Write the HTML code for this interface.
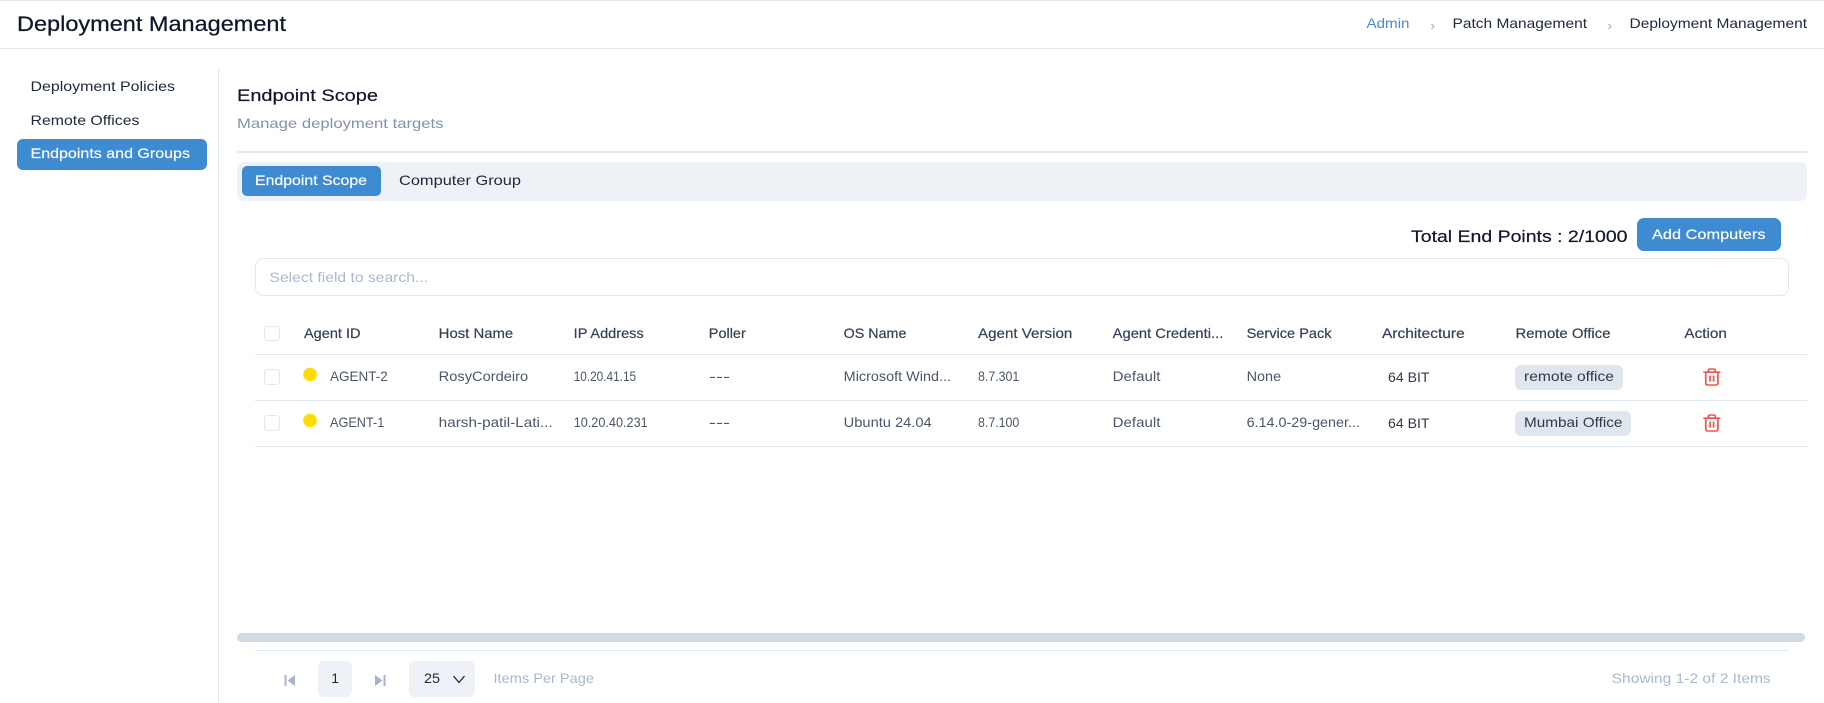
<!DOCTYPE html>
<html lang="en">
<head>
<meta charset="utf-8">
<title>Deployment Management</title>
<style>
html,body{margin:0;padding:0;background:#fff;width:1824px;height:703px;overflow:hidden}
svg{display:block}
text{font-family:"Liberation Sans",Arial,sans-serif;font-size:14px;white-space:pre}
.h{fill:#334155;stroke:#334155;stroke-width:.2px}
.c{fill:#4b5768}
.d{fill:#1e293b}
.m{fill:#a9b9ce}
.w{fill:#fff;stroke:#fff;stroke-width:.15px}
</style>
</head>
<body>
<svg width="1824" height="703" viewBox="0 0 1824 703" xmlns="http://www.w3.org/2000/svg">
<defs>
<g id="trash" fill="none" stroke="#f0564e" stroke-width="2" stroke-linecap="round" stroke-linejoin="round">
<path d="M3 6h18"/>
<path d="M19 6v14a2 2 0 0 1-2 2H7a2 2 0 0 1-2-2V6"/>
<path d="M8 6V4a2 2 0 0 1 2-2h4a2 2 0 0 1 2 2v2"/>
<path d="M10 11v6"/>
<path d="M14 11v6"/>
</g>
</defs>

<!-- header -->
<rect x="0" y="0" width="1824" height="1" fill="#e2e8f0"/>
<rect x="0" y="48" width="1824" height="1" fill="#e2e8f0"/>
<text x="17" y="31" textLength="269" lengthAdjust="spacingAndGlyphs" style="font-size:21px;fill:#0f172a;stroke:#0f172a;stroke-width:.25px">Deployment Management</text>
<text x="1366.5" y="28" textLength="43" lengthAdjust="spacingAndGlyphs" style="fill:#4a8bd0">Admin</text>
<path d="M1431.5 24l2.5 2.5-2.5 2.5" fill="none" stroke="#94a3b8" stroke-width=".9"/>
<text x="1452.5" y="28" textLength="134.5" lengthAdjust="spacingAndGlyphs" class="d">Patch Management</text>
<path d="M1608.5 24l2.5 2.5-2.5 2.5" fill="none" stroke="#94a3b8" stroke-width=".9"/>
<text x="1629.5" y="28" textLength="177.5" lengthAdjust="spacingAndGlyphs" class="d">Deployment Management</text>

<!-- sidebar -->
<rect x="218" y="68" width="1" height="635" fill="#e2e8f0"/>
<text x="30.5" y="91" textLength="144.5" lengthAdjust="spacingAndGlyphs" class="d">Deployment Policies</text>
<text x="30.5" y="125" textLength="109" lengthAdjust="spacingAndGlyphs" class="d">Remote Offices</text>
<rect x="17" y="139" width="190" height="31" rx="6" fill="#3f8bd2"/>
<text x="30.5" y="158" textLength="159.5" lengthAdjust="spacingAndGlyphs" class="w">Endpoints and Groups</text>

<!-- content head -->
<text x="237" y="101" textLength="141" lengthAdjust="spacingAndGlyphs" style="font-size:17px;fill:#0f172a;stroke:#0f172a;stroke-width:.2px">Endpoint Scope</text>
<text x="237" y="128" textLength="206.5" lengthAdjust="spacingAndGlyphs" style="fill:#8592a6">Manage deployment targets</text>
<rect x="237" y="151" width="1570" height="2" fill="#e2e8f0"/>

<!-- tabs -->
<rect x="237" y="162" width="1570" height="39" rx="7" fill="#eef1f6"/>
<rect x="242" y="166" width="139" height="30" rx="5" fill="#3f8bd2"/>
<text x="255" y="185" textLength="112" lengthAdjust="spacingAndGlyphs" class="w">Endpoint Scope</text>
<text x="399" y="185" textLength="122" lengthAdjust="spacingAndGlyphs" class="d">Computer Group</text>

<!-- toolbar -->
<text x="1411" y="242" textLength="216.5" lengthAdjust="spacingAndGlyphs" style="font-size:17px;fill:#0f172a;stroke:#0f172a;stroke-width:.2px">Total End Points : 2/1000</text>
<rect x="1637" y="218" width="144" height="33" rx="7" fill="#3f8bd2"/>
<text x="1652" y="239" textLength="113.5" lengthAdjust="spacingAndGlyphs" class="w">Add Computers</text>
<rect x="255.500" y="258.500" width="1533" height="37" rx="8" fill="#fff" stroke="#e2e8f0"/>
<text x="269.500" y="282" textLength="158.500" lengthAdjust="spacingAndGlyphs" class="m">Select field to search...</text>

<!-- table header -->
<rect x="264.500" y="326.500" width="15" height="14" rx="3" fill="#fff" stroke="#e2e8f0"/>
<text x="304" y="338" textLength="56.500" lengthAdjust="spacingAndGlyphs" class="h">Agent ID</text>
<text x="438.700" y="338" textLength="74.500" lengthAdjust="spacingAndGlyphs" class="h">Host Name</text>
<text x="573.700" y="338" textLength="70" lengthAdjust="spacingAndGlyphs" class="h">IP Address</text>
<text x="708.800" y="338" textLength="37" lengthAdjust="spacingAndGlyphs" class="h">Poller</text>
<text x="843.700" y="338" textLength="62.700" lengthAdjust="spacingAndGlyphs" class="h">OS Name</text>
<text x="978" y="338" textLength="94.300" lengthAdjust="spacingAndGlyphs" class="h">Agent Version</text>
<text x="1112.700" y="338" textLength="110.600" lengthAdjust="spacingAndGlyphs" class="h">Agent Credenti...</text>
<text x="1246.600" y="338" textLength="85" lengthAdjust="spacingAndGlyphs" class="h">Service Pack</text>
<text x="1382" y="338" textLength="82.700" lengthAdjust="spacingAndGlyphs" class="h">Architecture</text>
<text x="1515.500" y="338" textLength="95" lengthAdjust="spacingAndGlyphs" class="h">Remote Office</text>
<text x="1684.400" y="338" textLength="42.500" lengthAdjust="spacingAndGlyphs" class="h">Action</text>
<rect x="255" y="354" width="1552" height="1" fill="#e2e8f0"/>

<!-- row 1 -->
<rect x="264.500" y="369.500" width="15" height="15" rx="3" fill="#fff" stroke="#e2e8f0"/>
<circle cx="310" cy="374.500" r="6.800" fill="#ffdd00"/>
<text x="330" y="381" textLength="57.700" lengthAdjust="spacingAndGlyphs" class="c">AGENT-2</text>
<text x="438.700" y="381" textLength="89.500" lengthAdjust="spacingAndGlyphs" class="c">RosyCordeiro</text>
<text x="573.700" y="381" textLength="62.400" lengthAdjust="spacingAndGlyphs" class="c">10.20.41.15</text>
<text x="708.800" y="381" textLength="21.400" lengthAdjust="spacingAndGlyphs" class="c">---</text>
<text x="843.700" y="381" textLength="107.300" lengthAdjust="spacingAndGlyphs" class="c">Microsoft Wind...</text>
<text x="978" y="381" textLength="41.300" lengthAdjust="spacingAndGlyphs" class="c">8.7.301</text>
<text x="1112.700" y="381" textLength="47.700" lengthAdjust="spacingAndGlyphs" class="c">Default</text>
<text x="1246.600" y="381" textLength="34.500" lengthAdjust="spacingAndGlyphs" class="c">None</text>
<text x="1388" y="382" textLength="41.500" lengthAdjust="spacingAndGlyphs" style="fill:#2f3a4a">64 BIT</text>
<rect x="1515" y="365" width="108" height="25" rx="6" fill="#e0e6ee"/>
<text x="1524" y="381" textLength="90" lengthAdjust="spacingAndGlyphs" style="fill:#2f3a4a">remote office</text>
<use href="#trash" transform="translate(1701.400 367.400) scale(.87 .8)"/>
<rect x="255" y="400" width="1552" height="1" fill="#e2e8f0"/>

<!-- row 2 -->
<rect x="264.500" y="415.500" width="15" height="15" rx="3" fill="#fff" stroke="#e2e8f0"/>
<circle cx="310" cy="420.500" r="6.800" fill="#ffdd00"/>
<text x="330" y="427" textLength="54.300" lengthAdjust="spacingAndGlyphs" class="c">AGENT-1</text>
<text x="438.700" y="427" textLength="114" lengthAdjust="spacingAndGlyphs" class="c">harsh-patil-Lati...</text>
<text x="573.700" y="427" textLength="74" lengthAdjust="spacingAndGlyphs" class="c">10.20.40.231</text>
<text x="708.800" y="427" textLength="21.400" lengthAdjust="spacingAndGlyphs" class="c">---</text>
<text x="843.700" y="427" textLength="88" lengthAdjust="spacingAndGlyphs" class="c">Ubuntu 24.04</text>
<text x="978" y="427" textLength="41.300" lengthAdjust="spacingAndGlyphs" class="c">8.7.100</text>
<text x="1112.700" y="427" textLength="47.700" lengthAdjust="spacingAndGlyphs" class="c">Default</text>
<text x="1246.600" y="427" textLength="113.400" lengthAdjust="spacingAndGlyphs" class="c">6.14.0-29-gener...</text>
<text x="1388" y="428" textLength="41.500" lengthAdjust="spacingAndGlyphs" style="fill:#2f3a4a">64 BIT</text>
<rect x="1515" y="411" width="116" height="25" rx="6" fill="#e0e6ee"/>
<text x="1524" y="427" textLength="98.400" lengthAdjust="spacingAndGlyphs" style="fill:#2f3a4a">Mumbai Office</text>
<use href="#trash" transform="translate(1701.400 413.400) scale(.87 .8)"/>
<rect x="255" y="446" width="1552" height="1" fill="#e2e8f0"/>

<!-- scrollbar and footer -->
<rect x="237" y="633" width="1568" height="9" rx="4.500" fill="#d1dbe6"/>
<rect x="255" y="650" width="1534" height="1" fill="#e2e8f0"/>
<path d="M284.500 675h2v11h-2zM295 675v11l-7.500-5.500z" fill="#a3b4cb"/>
<rect x="318" y="661" width="34" height="36" rx="6" fill="#eef1f6"/>
<text x="331.200" y="683" style="font-size:14px;fill:#1e293b">1</text>
<path d="M375 675v11l7.500-5.500zM383.500 675h2v11h-2z" fill="#a3b4cb"/>
<rect x="409" y="661" width="66" height="36" rx="6" fill="#eef1f6"/>
<text x="424" y="683" textLength="16" lengthAdjust="spacingAndGlyphs" style="font-size:14px;fill:#1e293b">25</text>
<path d="M453.500 676l5.500 6.500 5.500-6.500" fill="none" stroke="#1e293b" stroke-width="1.300"/>
<text x="493.500" y="683" textLength="100.500" lengthAdjust="spacingAndGlyphs" class="m">Items Per Page</text>
<text x="1611.700" y="683" textLength="159" lengthAdjust="spacingAndGlyphs" class="m">Showing 1-2 of 2 Items</text>
</svg>
</body>
</html>
